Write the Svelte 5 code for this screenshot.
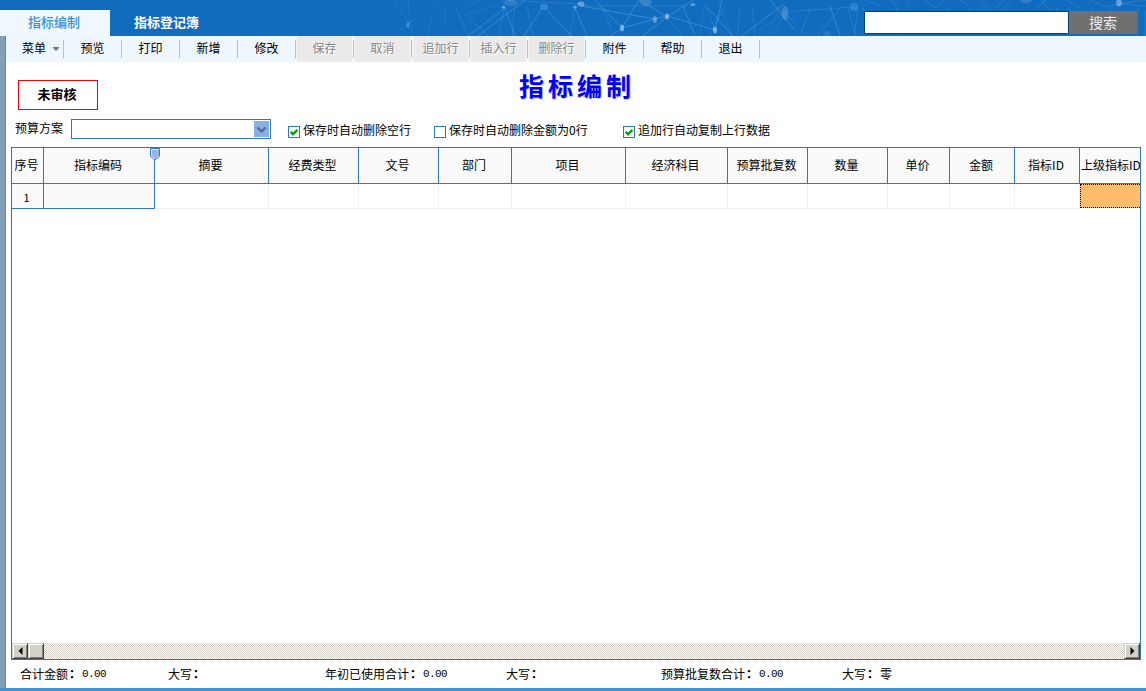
<script>
  const tools = [
    { label: '菜单', menu: true }, { label: '预览' }, { label: '打印' }, { label: '新增' }, { label: '修改' },
    { label: '保存', off: true }, { label: '取消', off: true }, { label: '追加行', off: true },
    { label: '插入行', off: true }, { label: '删除行', off: true },
    { label: '附件' }, { label: '帮助' }, { label: '退出' }
  ];
  const columns = [
    ['序号', 32], ['指标编码', 111], ['摘要', 114], ['经费类型', 90], ['文号', 80], ['部门', 73], ['项目', 114],
    ['经济科目', 102], ['预算批复数', 80], ['数量', 80], ['单价', 62], ['金额', 65], ['指标ID', 65], ['上级指标ID', 66]
  ];
  const grid = columns.map((c) => c[1] + 'px').join(' ');
  const checks = [
    { label: '保存时自动删除空行', on: true, w: 146 },
    { label: '保存时自动删除金额为0行', on: false, w: 189 },
    { label: '追加行自动复制上行数据', on: true, w: 160 }
  ];
  const totals = [
    { label: '合计金额', value: '0.00', w: 148 }, { label: '大写', value: '', w: 157 },
    { label: '年初已使用合计', value: '0.00', w: 181 }, { label: '大写', value: '', w: 155 },
    { label: '预算批复数合计', value: '0.00', w: 181 }, { label: '大写', value: '零', w: 60 }
  ];
  const nodes = [
    [408, 25, 1.5, 3, 0.3], [503.5, 7, 2, 1.5, 0.5], [511, 3, 7, 3, 0.2], [544, 7, 4, 3, 0.25], [575, 7, 2, 1.5, 0.5],
    [581, 4, 3.5, 2.5, 0.5], [646, 2, 6, 4, 0.2], [693, 4.5, 2.5, 1.5, 0.5], [622, 28, 2, 3.5, 0.65], [655, 19.5, 2, 3.5, 0.45],
    [667, 16.5, 2, 3, 0.65], [715, 30, 2, 3.5, 0.65], [785, 13, 3.5, 7, 0.25], [854, 7, 4, 4, 0.22], [827, 34, 4, 3, 0.15],
    [1026, 0, 6, 3, 0.2], [1119, 3, 3, 3.5, 0.5]
  ];
</script>

<div class="app">
  <header>
    <svg class="net" width="766" height="36" viewBox="380 0 766 36" aria-hidden="true">
      <g fill="none" stroke="#8fc4f2" stroke-width=".8">
        <path opacity=".15" d="M394 0l15 24-18 12M409 24l30-24M432 15l-5 21M445 8v16M510 0l-45 15M408 0l4 34M480 0l-14 7M700 36l4-30M718 0l14 36M768 36l12-30M1010 0l-18 36" />
        <path opacity=".22" d="M455 6l13 30M466 15l22 21M515 6l-3 30M527 6l6 30M500 0l80 4M579 6h114M575 8l-5 28M504 8l-5 28M601 6l11 25M667 17l16 19M715 30l-10-26M725 6l-16 30M740 6l-3 30M752 6l3 30M760 30l25-18 67-5M785 13l-12 23M785 13l22 23M800 36l11-30M817 36l25-30M848 8l8 28M858 6l-4 30M862 6l12 28" />
        <path opacity=".4" d="M468 36l37-28 10 28M478 36l47-36M542 8l-18 28M545 8l27 28M575 8l12 28M581 6l74 13M595 0l27 28 17-28M610 36l12-8 33-9 12-3 48 14M640 0l27 17-25 19M667 17l26-17M715 30l7-30M683 6l12 30M708 8l25 28M742 36l43-33M770 0l25 30M830 6l10 30" />
        <path opacity=".25" d="M865 0l15 6M890 0l8 6M910 0l-4 6M925 0l10 8 10-8M960 0l9 6M980 0l9 8M1004 0l-8 8M1037 8l9-8M1041 0l7 8M1050 8v20M1057 7v12M1066 0l15 8M1090 0l15 7 14-3 27-4M1119 3l20 3h7M1138 7l-1 29M1145 10v26M896 7l3 29M947 7v6M970 7v6M984 7v6M1070 7l-3 29M1091 7v6M1112 7l-2 29" />
      </g>
      <g fill="#a9d3f6">
        {#each nodes as n}
          <ellipse cx={n[0]} cy={n[1]} rx={n[2]} ry={n[3]} opacity={n[4]} />
        {/each}
      </g>
    </svg>
    <div class="tab active">指标编制</div>
    <div class="tab">指标登记簿</div>
    <div class="search">
      <input type="text" aria-label="搜索" />
      <button>搜索</button>
    </div>
  </header>

  <div class="body">
    <nav>
      {#each tools as t}
        <div class="tool" class:menu={t.menu} class:off={t.off}>
          <span>{t.label}</span>
          {#if t.menu}
            <svg class="caret" width="6" height="4" viewBox="0 0 6 4"><path d="M0 0h6v1L3 4 0 1z" fill="#777" /></svg>
          {/if}
        </div>
      {/each}
    </nav>

    <div class="heading">
      <div class="stamp">未审核</div>
      <h1>指标编制</h1>
    </div>

    <div class="options">
      <span class="lbl">预算方案</span>
      <div class="combo">
        <span class="arrow">
          <svg width="15" height="16" viewBox="0 0 15 16"><path d="M3.5 6.5l4 4 4-4" fill="none" stroke="#466a9b" stroke-width="2.2" /></svg>
        </span>
      </div>
      <div class="checks">
        {#each checks as c}
          <div class="check" style="width:{c.w}px">
            <span class="box">
              {#if c.on}
                <svg width="10" height="10" viewBox="0 0 10 10"><path d="M1.7 4.7L4 7.300 8.400 2.900" fill="none" stroke="#0a9a0a" stroke-width="2.4" /></svg>
              {/if}
            </span>
            <span>{c.label}</span>
          </div>
        {/each}
      </div>
    </div>

    <div class="table">
      <div class="row head" style="grid-template-columns:{grid}">
        {#each columns as c, i}
          <div class="cell">
            <span>{c[0]}</span>
            {#if i === 1}
              <svg class="pin" width="10" height="12" viewBox="0 0 10 12"><path d="M.5 .5h9v7.5L6 11.500H4L.5 8z" fill="#dce8f8" stroke="#2b78c5" /><path d="M2 2h7v5.800L5.800 10.500H4.500L2 8z" fill="#97b3e2" /></svg>
            {/if}
          </div>
        {/each}
      </div>
      <div class="row data" style="grid-template-columns:{grid}">
        {#each columns as c, i}
          <div class="cell" class:fixed={i < 2} class:current={i === 13}>{i === 0 ? '1' : ''}</div>
        {/each}
      </div>
      <div class="blank"></div>
      <div class="scroll">
        <span class="btn"><svg width="5" height="8" viewBox="0 0 5 8"><path d="M4.500 0v8L.5 4z" /></svg></span>
        <span class="btn"></span>
        <span class="btn last"><svg width="5" height="8" viewBox="0 0 5 8"><path d="M.5 0v8l4-4z" /></svg></span>
      </div>
    </div>

    <footer>
      {#each totals as t}
        <div class="total" style="width:{t.w}px">
          <span>{t.label}</span><span class="colon" lang="zh-TW">：</span><span class="val" class:num={t.value === '0.00'}>{t.value}</span>
        </div>
      {/each}
    </footer>
  </div>
</div>

<style>
  :global(body) { margin: 0; background: #fff; overflow: hidden; }
  .app {
    width: 1146px; height: 691px; display: flex; flex-direction: column; overflow: hidden;
    font: 12px/16px "Noto Sans CJK SC", sans-serif; color: #000; white-space: nowrap;
  }
  .app * { box-sizing: border-box; }
  header { position: relative; display: flex; align-items: flex-end; height: 36px; flex: none; background: #116cbf; }
  .net { position: absolute; right: 0; top: 0; }
  .tab { height: 26px; line-height: 24px; padding-left: 24px; font-size: 13px; font-weight: 700; color: #fff; }
  .tab.active { width: 110px; padding-left: 28px; background: #f0f8fe; color: #3890d5; font-weight: 500; }
  .search { position: relative; display: flex; margin: 0 9px 2px auto; height: 23px; }
  input { width: 205px; height: 23px; padding: 0 4px; border: 1px solid #073d78; border-radius: 0; background: #fff; outline: 0; }
  button { width: 68px; height: 23px; padding: 0 0 2px; border: 0; background: #707070; color: #e8eef4; font: 14px/20px "Noto Sans CJK SC", sans-serif; }
  .body { flex: 1; display: flex; flex-direction: column; border-left: 5px solid #859fb8; box-shadow: inset 1px 0 #3d94d8; position: relative; }
  .body::after { content: ''; position: absolute; left: -5px; right: 0; bottom: 0; height: 3px; background: #3d94d8; }
  nav { display: flex; height: 26px; flex: none; background: #eef7fd; border-left: 1px solid #3d94d8; }
  .tool { position: relative; display: flex; align-items: center; justify-content: center; width: 58px; height: 26px; padding: 0 1px 2px 0; }
  .tool::after { content: ''; position: absolute; right: 0; top: 4px; width: 1px; height: 18px; background: #bdbdbd; }
  .menu { justify-content: flex-start; padding-left: 16px; }
  .caret { margin: 2px 0 0 7px; }
  .off { color: #858585; text-shadow: 1px 1px #fff; background: linear-gradient(90deg, #f2f6f9 1px, #eaeaea 1px, #eaeaea 56px, #f2f6f9 56px); }
  .heading { display: flex; height: 56px; flex: none; padding-left: 13px; }
  .stamp { width: 80px; height: 30px; margin-top: 18px; border: 1px solid #f00; font-size: 13px; font-weight: 700; line-height: 26px; text-align: center; padding-right: 2px; }
  h1 { margin: 4px 0 0 421px; font: 700 25px/38px "Noto Sans CJK SC", sans-serif; letter-spacing: 4px; color: #00f; text-shadow: 1px 1px #ccc; }
  .options { display: flex; align-items: flex-start; height: 29px; flex: none; padding-left: 10px; }
  .lbl { width: 56px; margin-top: 2px; }
  .combo { display: flex; justify-content: flex-end; width: 200px; height: 20px; margin-top: 1px; padding: 1px; border: 1px solid #2b78c5; }
  .arrow { width: 15px; height: 16px; background: #89ade5; }
  .arrow svg, .box svg { display: block; }
  .checks { display: flex; margin: 4px 0 0 17px; }
  .check { display: flex; gap: 3px; }
  .box { width: 12px; height: 12px; border: 1px solid #2b78c5; margin-top: 4px; }
  .table { width: 1130px; height: 513px; flex: none; display: flex; flex-direction: column; position: relative; margin-left: 6px; }
  .table::after { content: ''; position: absolute; inset: 0; border: 1px solid #2b78c5; pointer-events: none; }
  .row { display: grid; overflow: hidden; padding-left: 1px; flex: none; }
  .head { height: 37px; padding-top: 1px; background: #fafafa; border-bottom: 1px solid #2b78c5; }
  .head .cell { position: relative; display: flex; justify-content: center; align-items: center; height: 35px; border-right: 1px solid #2b78c5; padding: 0 2px 1px 0; }
  .head .cell:last-child { justify-content: flex-start; padding-left: 1px; }
  .pin { position: absolute; right: -6px; top: 0; z-index: 2; }
  .data { height: 25px; }
  .data .cell { height: 25px; border-right: 1px solid #f0f0f0; border-bottom: 1px solid #f0f0f0; line-height: 27px; text-align: center; padding-right: 2px; font-size: 11px; }
  .data .fixed { background: #fafafa; border-color: #2b78c5; }
  .data .current { height: 24px; background: #ffbd6b; border: 1px dotted #000; }
  .blank { flex: 1; }
  .scroll {
    display: flex; width: 1128px; height: 16px; margin: 0 0 1px 1px; background-color: #fff;
    background-image: conic-gradient(#d4d0c8 25%, transparent 0 50%, #d4d0c8 0 75%, transparent 0); background-size: 2px 2px;
  }
  .btn { display: flex; align-items: center; justify-content: center; width: 16px; height: 16px; background: #d4d0c8; border: 1px solid; border-color: #d4d0c8 #404040 #404040 #d4d0c8; box-shadow: inset 1px 1px #fff, inset -1px -1px #808080; }
  .last { margin-left: auto; }
  footer { display: flex; align-items: center; flex: 1; padding: 0 0 3px 15px; }
  .total { display: flex; flex: none; height: 16px; }
  .colon { width: 12px; margin-left: -2px; font-family: "Noto Sans CJK TC", sans-serif; font-weight: 700; }
  .val { margin-left: 4px; }
  .num { font: 11px/17px "Liberation Mono", monospace; letter-spacing: -.6px; }
</style>
